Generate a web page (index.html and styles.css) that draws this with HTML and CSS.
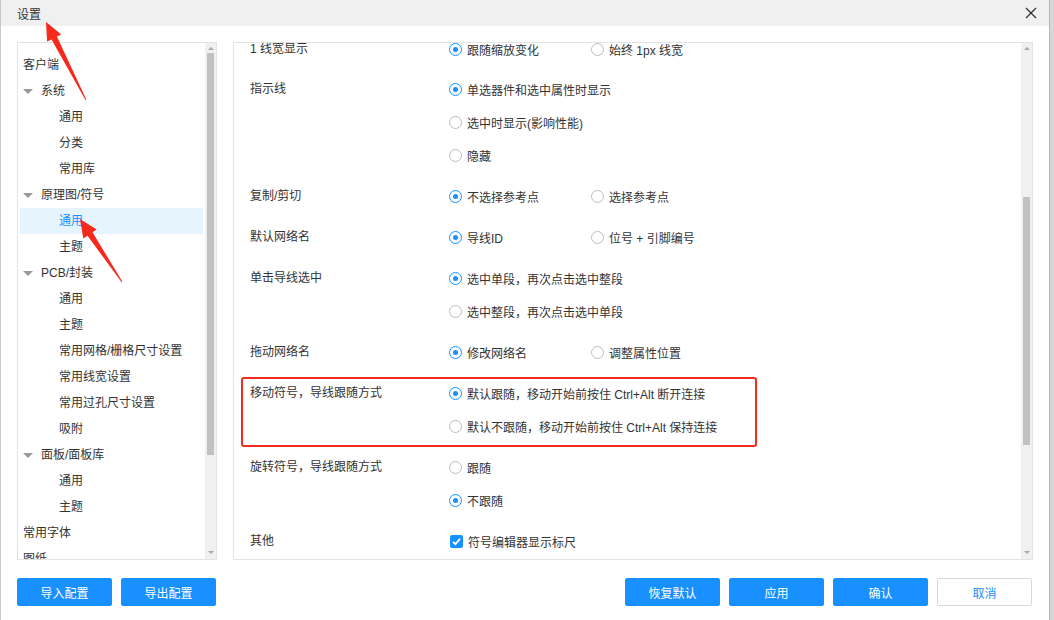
FILE: index.html
```html
<!DOCTYPE html>
<html lang="zh">
<head>
<meta charset="utf-8">
<link rel="stylesheet" href="styles.css">
</head>
<body>
<div class="page">
  <div class="dialog">
    <div class="titlebar">
      <span class="title">设置</span>
      <svg class="close" width="12" height="12" viewBox="0 0 12 12"><path d="M1 1L11 11M11 1L1 11" stroke="#333" stroke-width="1.3"/></svg>
    </div>
    <div class="main">
      <div class="panel tree-panel">
        <div class="tree">
          <div class="node l0">客户端</div>
          <div class="node l1"><i class="tri"></i>系统</div>
          <div class="node l2">通用</div>
          <div class="node l2">分类</div>
          <div class="node l2">常用库</div>
          <div class="node l1"><i class="tri"></i>原理图/符号</div>
          <div class="node l2 active">通用</div>
          <div class="node l2">主题</div>
          <div class="node l1"><i class="tri"></i>PCB/封装</div>
          <div class="node l2">通用</div>
          <div class="node l2">主题</div>
          <div class="node l2">常用网格/栅格尺寸设置</div>
          <div class="node l2">常用线宽设置</div>
          <div class="node l2">常用过孔尺寸设置</div>
          <div class="node l2">吸附</div>
          <div class="node l1"><i class="tri"></i>面板/面板库</div>
          <div class="node l2">通用</div>
          <div class="node l2">主题</div>
          <div class="node l0">常用字体</div>
          <div class="node l0">图纸</div>
        </div>
        <div class="sbar">
          <i class="arr up"></i>
          <div class="thumb tree-thumb"></div>
          <div class="sfill"></div>
          <i class="arr down"></i>
        </div>
      </div>
      <div class="panel set-panel">
        <div class="settings">
          <div class="group first">
            <div class="label">1 线宽显示</div>
            <div class="opts">
              <div class="line"><span class="opt"><i class="radio on"></i>跟随缩放变化</span><span class="opt"><i class="radio"></i>始终 1px 线宽</span></div>
            </div>
          </div>
          <div class="group">
            <div class="label">指示线</div>
            <div class="opts">
              <div class="line"><span class="opt"><i class="radio on"></i>单选器件和选中属性时显示</span></div>
              <div class="line"><span class="opt"><i class="radio"></i>选中时显示(影响性能)</span></div>
              <div class="line"><span class="opt"><i class="radio"></i>隐藏</span></div>
            </div>
          </div>
          <div class="group">
            <div class="label">复制/剪切</div>
            <div class="opts">
              <div class="line"><span class="opt"><i class="radio on"></i>不选择参考点</span><span class="opt"><i class="radio"></i>选择参考点</span></div>
            </div>
          </div>
          <div class="group">
            <div class="label">默认网络名</div>
            <div class="opts">
              <div class="line"><span class="opt"><i class="radio on"></i>导线ID</span><span class="opt"><i class="radio"></i>位号 + 引脚编号</span></div>
            </div>
          </div>
          <div class="group">
            <div class="label">单击导线选中</div>
            <div class="opts">
              <div class="line"><span class="opt"><i class="radio on"></i>选中单段，再次点击选中整段</span></div>
              <div class="line"><span class="opt"><i class="radio"></i>选中整段，再次点击选中单段</span></div>
            </div>
          </div>
          <div class="group">
            <div class="label">拖动网络名</div>
            <div class="opts">
              <div class="line"><span class="opt"><i class="radio on"></i>修改网络名</span><span class="opt"><i class="radio"></i>调整属性位置</span></div>
            </div>
          </div>
          <div class="group marked">
            <div class="label">移动符号，导线跟随方式</div>
            <div class="opts">
              <div class="line"><span class="opt"><i class="radio on"></i>默认跟随，移动开始前按住 Ctrl+Alt 断开连接</span></div>
              <div class="line"><span class="opt"><i class="radio"></i>默认不跟随，移动开始前按住 Ctrl+Alt 保持连接</span></div>
            </div>
          </div>
          <div class="group">
            <div class="label">旋转符号，导线跟随方式</div>
            <div class="opts">
              <div class="line"><span class="opt"><i class="radio"></i>跟随</span></div>
              <div class="line"><span class="opt"><i class="radio on"></i>不跟随</span></div>
            </div>
          </div>
          <div class="group">
            <div class="label">其他</div>
            <div class="opts">
              <div class="line"><span class="opt"><i class="check"><svg width="13" height="13" viewBox="0 0 13 13"><path d="M3 6.8L5.4 9.2L10 3.8" fill="none" stroke="#fff" stroke-width="1.8"/></svg></i>符号编辑器显示标尺</span></div>
            </div>
          </div>
        </div>
        <div class="sbar">
          <i class="arr up"></i>
          <div class="sgap"></div>
          <div class="thumb set-thumb"></div>
          <div class="sfill"></div>
          <i class="arr down"></i>
        </div>
      </div>
    </div>
    <div class="footer">
      <div class="btns">
        <button class="btn">导入配置</button>
        <button class="btn">导出配置</button>
      </div>
      <div class="btns">
        <button class="btn">恢复默认</button>
        <button class="btn">应用</button>
        <button class="btn">确认</button>
        <button class="btn ghost">取消</button>
      </div>
    </div>
  </div>
  <div class="backdrop"></div>
  <svg class="annot" width="1054" height="620" viewBox="0 0 1054 620">
    <polygon fill="#f42a1c" points="46,22 61.3,34.4 56.9,36.6 86.4,99.8 85.6,100.2 51.5,39.4 47.1,41.6"/>
    <polygon fill="#f42a1c" points="80,219 96.7,229.6 92.5,232.3 122.4,281.7 121.6,282.3 87.5,235.7 83.3,238.4"/>
  </svg>
</div>
</body>
</html>
```

FILE: styles.css
```css
* { box-sizing: border-box; }
html, body { margin: 0; padding: 0; }
body {
  width: 1054px;
  height: 620px;
  overflow: hidden;
  font-family: "Liberation Sans", "Noto Sans CJK SC", sans-serif;
  font-size: 12px;
  color: #333;
  background: #fff;
}
.page {
  position: relative;
  display: flex;
  width: 1054px;
  height: 620px;
}
.dialog {
  width: 1049px;
  height: 620px;
  background: #fff;
  border-left: 1px solid #c8c8c8;
  display: flex;
  flex-direction: column;
}
.backdrop {
  flex: 1;
  background: #d6d6d6;
  border-left: 1px solid #b8b8b8;
}
.titlebar {
  height: 26px;
  background: #f0f0f0;
  display: flex;
  align-items: center;
  justify-content: space-between;
  padding: 0 12px 0 16px;
}
.title { font-size: 12px; color: #333; }
.close { display: block; }
.main {
  display: flex;
  gap: 16px;
  padding: 16px 16px 0 16px;
  height: 534px;
}
.panel {
  border: 1px solid #e3e3e3;
  display: flex;
  height: 518px;
  overflow: hidden;
}
.tree-panel { width: 200px; }
.set-panel { width: 800px; }
.tree {
  flex: 1;
  padding: 9px 2px 0 2px;
  overflow: hidden;
}
.node {
  height: 26px;
  line-height: 26px;
  white-space: nowrap;
  display: flex;
  align-items: center;
}
.node.l0 { padding-left: 3px; }
.node.l1 { padding-left: 3px; }
.node.l2 { padding-left: 39px; }
.node.active { background: #e6f4fe; color: #1890ff; }
.tri {
  width: 0;
  height: 0;
  border-left: 5px solid transparent;
  border-right: 5px solid transparent;
  border-top: 5px solid #999;
  margin-right: 8px;
}
.sbar {
  width: 11px;
  background: #f0f0f0;
  display: flex;
  flex-direction: column;
  align-items: center;
}
.arr {
  width: 0;
  height: 0;
  border-left: 3px solid transparent;
  border-right: 3px solid transparent;
  margin: 4px 0;
  flex: none;
}
.arr.up { border-bottom: 3px solid #a8a8a8; margin-top: 4px; margin-bottom: 3px; }
.arr.down { border-top: 3px solid #a8a8a8; margin-bottom: 5px; }
.thumb { width: 7px; background: #c1c1c1; flex: none; }
.tree-thumb { height: 402px; }
.set-thumb { height: 248px; }
.sgap { height: 144px; flex: none; }
.sfill { flex: 1; }
.settings {
  flex: 1;
  padding: 0 0 0 16px;
  margin-top: -10px;
  overflow: hidden;
}
.group {
  display: grid;
  grid-template-columns: 200px 1fr;
  margin-bottom: 8px;
  position: relative;
}
.group.first { margin-bottom: 7px; }
.group.marked::after {
  content: "";
  position: absolute;
  left: -9px;
  top: 0;
  width: 512px;
  bottom: -4px;
  border: 2px solid #f42a1c;
  border-radius: 3px;
}
.label { height: 33px; line-height: 33px; white-space: nowrap; }
.line { height: 33px; display: flex; align-items: center; }
.opt {
  display: flex;
  align-items: center;
  width: 142px;
  white-space: nowrap;
}
.line .opt:only-child { width: auto; }
.radio {
  width: 13px;
  height: 13px;
  border: 1px solid #bdbdbd;
  border-radius: 50%;
  margin-right: 5px;
  margin-left: -1px;
  flex: none;
  display: flex;
  align-items: center;
  justify-content: center;
  background: #fff;
}
.radio.on { border-color: #1890ff; }
.radio.on::after {
  content: "";
  width: 5px;
  height: 5px;
  border-radius: 50%;
  background: #1890ff;
}
.check {
  width: 13px;
  height: 13px;
  background: #1890ff;
  border-radius: 2px;
  margin-right: 5px;
  flex: none;
  display: flex;
}
.footer {
  display: flex;
  justify-content: space-between;
  padding: 18px 17px 0 16px;
}
.btns { display: flex; gap: 9px; }
.btn {
  width: 95px;
  height: 28px;
  border: 1px solid #1890ff;
  background: #1890ff;
  color: #fff;
  border-radius: 2px;
  font-family: "Liberation Sans", "Noto Sans CJK SC", sans-serif;
  font-size: 12px;
  padding: 0;
}
.btn.ghost { background: #fff; border-color: #d9d9d9; color: #1890ff; }
.annot {
  position: absolute;
  left: 0;
  top: 0;
  pointer-events: none;
}
```
